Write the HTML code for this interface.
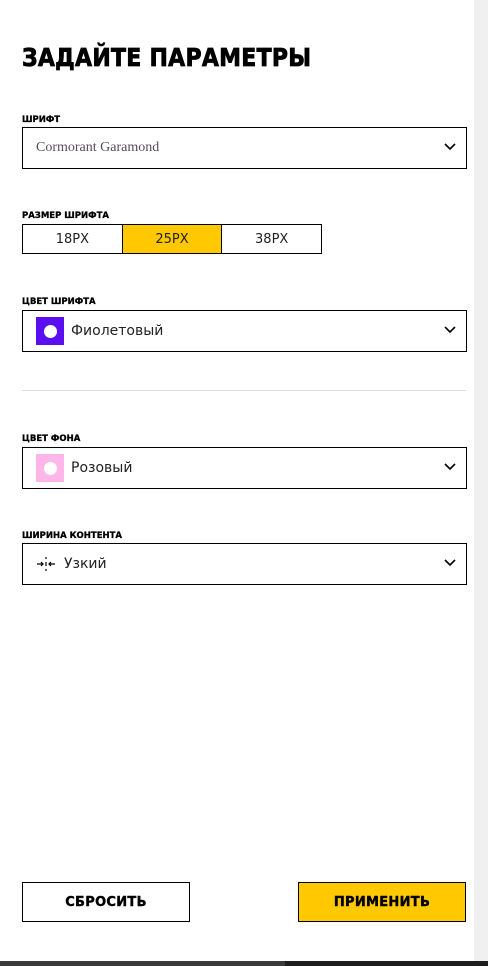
<!DOCTYPE html>
<html><head><meta charset="utf-8"><style>
*{box-sizing:border-box;margin:0;padding:0}
body{width:488px;height:966px;background:#fff;font-family:"Liberation Sans","DejaVu Sans",sans-serif;position:relative;overflow:hidden;color:#000}
.sb{position:absolute;right:0;top:0;width:14px;height:961px;background:#f0f0f0}
.bot{position:absolute;left:0;bottom:0;width:488px;height:5px;background:#1e1e1e}
.bot i{position:absolute;left:0;top:0;width:285px;height:5px;background:#3a3a3a}
h1{position:absolute;left:22px;top:43px;font-size:25px;font-weight:900;letter-spacing:0.3px;font-family:"DejaVu Sans","Liberation Sans",sans-serif;transform:scaleX(0.88);transform-origin:left;-webkit-text-stroke:0.8px #000}
.lab{position:absolute;left:22px;font-size:8.5px;font-weight:900;font-family:"DejaVu Sans",sans-serif;-webkit-text-stroke:0.3px #000}
.sel{position:absolute;left:22px;width:445px;height:42px;border:1.5px solid #000;display:flex;align-items:center;padding-left:13px;font-size:14px;font-family:"DejaVu Sans",sans-serif;color:#222}
.sel svg.ch{position:absolute;right:10px;top:15px}
.sw{width:28px;height:28px;display:flex;align-items:center;justify-content:center;margin-right:7px}
.sw b{width:13px;height:13px;border-radius:50%;background:#fff}
.sizes{position:absolute;left:22px;top:224px;width:300px;height:30px;border:1.5px solid #000;display:flex}
.sizes div{flex:1;display:flex;align-items:center;justify-content:center;font-size:13px;font-family:"DejaVu Sans",sans-serif;color:#222}
.sizes div+div{border-left:1.5px solid #000}
hr{position:absolute;left:22px;top:390px;width:444px;border:0;border-top:1px solid #ddd}
.btn{position:absolute;top:882px;width:168px;height:40px;border:1.5px solid #000;display:flex;align-items:center;justify-content:center;font-weight:900;font-size:13px;font-family:"DejaVu Sans",sans-serif;letter-spacing:0.3px;-webkit-text-stroke:0.4px #000}
</style></head><body>
<div class="sb"></div><div class="bot"><i></i></div>
<h1>ЗАДАЙТЕ ПАРАМЕТРЫ</h1>
<div class="lab" style="top:115px">ШРИФТ</div>
<div class="sel" style="top:127px;font-family:'Liberation Serif',serif;color:#5a4a5a;font-size:14px">Cormorant Garamond<svg class="ch" width="12" height="8" viewBox="0 0 12 8"><path d="M1 1l5 5 5-5" fill="none" stroke="#000" stroke-width="1.6"/></svg></div>
<div class="lab" style="top:211px">РАЗМЕР ШРИФТА</div>
<div class="sizes"><div>18PX</div><div style="background:#ffc800">25PX</div><div>38PX</div></div>
<div class="lab" style="top:297px">ЦВЕТ ШРИФТА</div>
<div class="sel" style="top:310px"><div class="sw" style="background:#5b0ff0"><b></b></div>Фиолетовый<svg class="ch" width="12" height="8" viewBox="0 0 12 8"><path d="M1 1l5 5 5-5" fill="none" stroke="#000" stroke-width="1.6"/></svg></div>
<hr>
<div class="lab" style="top:434px">ЦВЕТ ФОНА</div>
<div class="sel" style="top:447px"><div class="sw" style="background:#ffb6e8"><b></b></div>Розовый<svg class="ch" width="12" height="8" viewBox="0 0 12 8"><path d="M1 1l5 5 5-5" fill="none" stroke="#000" stroke-width="1.6"/></svg></div>
<div class="lab" style="top:531px">ШИРИНА КОНТЕНТА</div>
<div class="sel" style="top:543px"><svg width="20" height="20" viewBox="0 0 20 20" style="margin-right:8px"><path d="M10 3v2M10 8v4M10 15v2" stroke="#000" stroke-width="1.2"/><path d="M1 10h6M5 8l2 2-2 2M19 10h-6M15 8l-2 2 2 2" fill="none" stroke="#000" stroke-width="1.2"/></svg>Узкий<svg class="ch" width="12" height="8" viewBox="0 0 12 8"><path d="M1 1l5 5 5-5" fill="none" stroke="#000" stroke-width="1.6"/></svg></div>
<div class="btn" style="left:22px">СБРОСИТЬ</div>
<div class="btn" style="left:298px;background:#ffc800">ПРИМЕНИТЬ</div>
</body></html>
